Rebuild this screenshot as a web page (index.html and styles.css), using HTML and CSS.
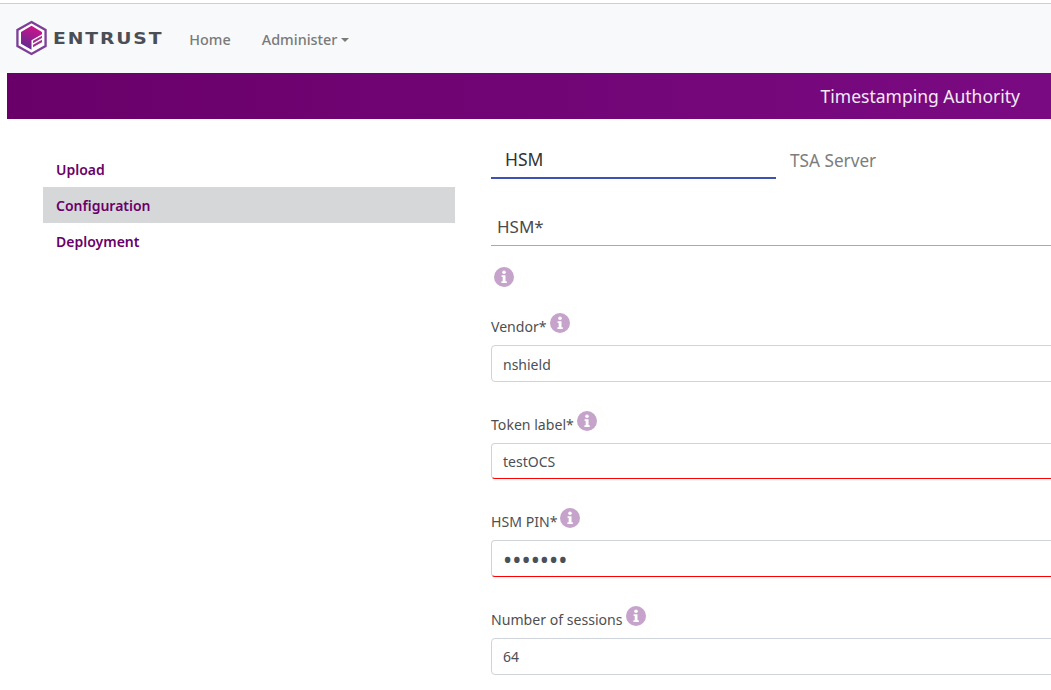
FILE: index.html
```html
<!DOCTYPE html>
<html lang="en">
<head>
<meta charset="utf-8">
<title>Timestamping Authority</title>
<link rel="stylesheet" href="styles.css">
</head>
<body>
<svg class="defs" width="0" height="0" aria-hidden="true">
  <symbol id="info" viewBox="0 0 20 20">
    <circle cx="10" cy="10" r="10" fill="#c6a3cb"/>
    <circle cx="10" cy="5.3" r="1.8" fill="#fff"/>
    <path d="M7.6 8.2h3.9v6h1.3v1.9H7.4v-1.9h1.3V10H7.6z" fill="#fff"/>
  </symbol>
</svg>
<header class="navbar">
  <a class="brand" href="#">
    <svg class="logo" viewBox="0 0 34 36" width="33" height="36">
      <defs>
        <linearGradient id="lg" x1="0.7" y1="0" x2="0.3" y2="1">
          <stop offset="0" stop-color="#d3128c"/>
          <stop offset="1" stop-color="#5c2a91"/>
        </linearGradient>
      </defs>
      <path d="M17 1.500 31.500 9.800v16.400L17 34.500 2.500 26.200V9.800z" fill="#fff" stroke="#7d3f98" stroke-width="2.400"/>
      <path d="M17 5.500 27.800 11.800v2.400L17 20.400v9.800L6.200 24V11.800z" fill="url(#lg)"/>
      <path d="M18.600 20.800 27.800 15.600v2.500l-9.200 5.200zM18.600 25 27.800 19.800v2.500l-9.200 5.200z" fill="#a3308f"/>
    </svg>
    <span class="wordmark">ENTRUST</span>
  </a>
  <nav class="nav">
    <a class="nav-link" href="#">Home</a>
    <a class="nav-link" href="#">Administer<span class="caret"></span></a>
  </nav>
</header>
<div class="banner"><span class="banner-title">Timestamping Authority</span></div>
<div class="page">
  <aside class="side">
    <a class="side-link" href="#">Upload</a>
    <a class="side-link active" href="#">Configuration</a>
    <a class="side-link" href="#">Deployment</a>
  </aside>
  <main class="content">
    <div class="tabs">
      <a class="tab active" href="#">HSM</a>
      <a class="tab" href="#">TSA Server</a>
    </div>
    <h2 class="section">HSM*</h2>
    <svg class="info info-solo"><use href="#info"/></svg>
    <div class="field first">
      <label class="label">Vendor*<svg class="info"><use href="#info"/></svg></label>
      <div class="input">nshield</div>
    </div>
    <div class="field">
      <label class="label">Token label*<svg class="info"><use href="#info"/></svg></label>
      <div class="input invalid short">testOCS</div>
    </div>
    <div class="field">
      <label class="label">HSM PIN*<svg class="info"><use href="#info"/></svg></label>
      <div class="input invalid pin">•••••••</div>
    </div>
    <div class="field">
      <label class="label">Number of sessions<svg class="info"><use href="#info"/></svg></label>
      <div class="input last">64</div>
    </div>
  </main>
</div>
</body>
</html>
```
FILE: styles.css
```css
* { box-sizing: border-box; }
html, body { margin: 0; padding: 0; height: 690px; overflow: hidden; background: #fff; }
body { font-family: "Noto Sans", "Open Sans", sans-serif; color: #495057; padding-top: 3px; font-size: 14px; }
a { text-decoration: none; }
.defs { display: block; height: 0; }

.navbar { height: 70px; background: #f8f9fa; border-top: 1px solid #cfcfcf; display: flex; align-items: center; padding: 0 0 0 15px; }
.brand { display: flex; align-items: center; gap: 5px; }
.logo { display: block; margin-top: -1px; }
.wordmark { font-family: "DejaVu Sans", sans-serif; font-weight: 700; font-size: 15px; letter-spacing: 1.5px; color: #4a4f57; transform: scaleX(1.25); transform-origin: left center; margin-right: 22px; padding-top: 1px; }
.nav { display: flex; margin-left: 26px; gap: 31px; padding-top: 2px; }
.nav-link { font-size: 14.4px; font-weight: 500; color: #7a7a7a; }
.caret { display: inline-block; margin-left: 4px; vertical-align: 3px; border-top: 4px solid #7a7a7a; border-left: 4px solid transparent; border-right: 4px solid transparent; }

.banner { height: 46px; margin-left: 7px; background: linear-gradient(90deg, #690069, #7a0a82); display: flex; align-items: center; justify-content: flex-end; padding-right: 31px; }
.banner-title { color: #f3eaf5; font-size: 17.5px; }

.page { display: flex; padding: 32px 0 0 43px; }
.side { width: 412px; flex: none; display: flex; flex-direction: column; }
.side-link { height: 36px; display: flex; align-items: center; padding-left: 13px; font-size: 14px; font-weight: 600; color: #690069; }
.side-link.active { background: #d6d7d9; }

.content { margin-left: 36px; width: 800px; flex: none; }
.tabs { display: flex; height: 28px; }
.tab { width: 285px; padding-left: 14px; font-size: 17.2px; line-height: 17px; color: #7d7d7d; }
.tab.active { color: #333; border-bottom: 2px solid #3f51b5; font-size: 17.5px; }
.tab + .tab { padding-top: 1px; }
.section { margin: 30px 0 0; height: 37px; padding: 6px 0 0 6px; border-bottom: 1px solid #aaa; font-size: 17px; line-height: 24px; font-weight: 400; color: #4a4a4a; }

.info { display: inline-block; width: 20px; height: 20px; }
.info-solo { display: block; margin: 21px 0 0 3px; }
.field { margin-top: 32px; }
.field.first { margin-top: 29px; }
.label { display: flex; align-items: flex-start; height: 29px; font-size: 14.1px; line-height: 22px; color: #4f4f4f; }
.label .info { margin: -3px 0 0 3px; flex: none; }
.input { height: 37px; border: 1px solid #ced4da; border-radius: 4px; padding-left: 11px; line-height: 37px; font-size: 14px; color: #495057; background: #fff; }
.input.invalid { border-bottom-color: #f00; }
.input.short { height: 36px; line-height: 35px; }
.input.last { line-height: 35px; }
.pin { font-size: 24.5px; line-height: 37px; }
```
